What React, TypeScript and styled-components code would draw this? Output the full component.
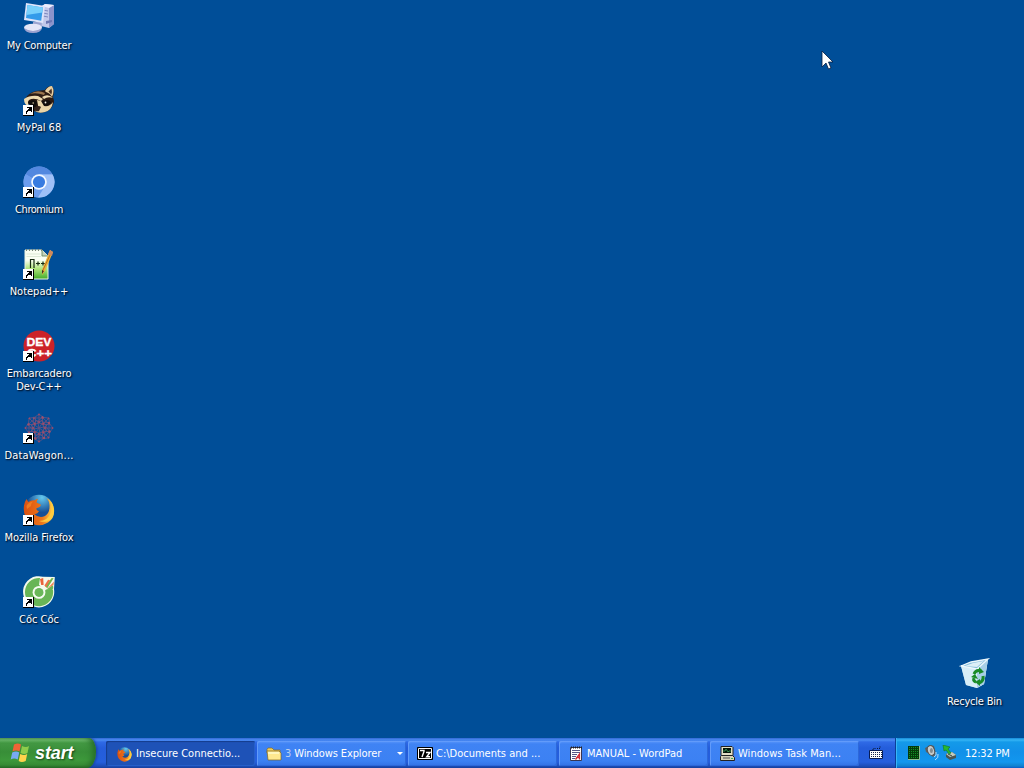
import React from 'react';
import styled, { createGlobalStyle, css } from 'styled-components';

const GlobalStyle = createGlobalStyle`
  * { box-sizing: border-box; }
  body { margin: 0; overflow: hidden; background: #004e98; }
`;

const Screen = styled.div`
  width: 1024px;
  height: 768px;
  display: flex;
  flex-direction: column;
  overflow: hidden;
  background: #004e98;
  font-family: 'DejaVu Sans Condensed', 'DejaVu Sans', sans-serif;
  font-stretch: condensed;
  font-size: 11px;
  color: #fff;
  cursor: default;
`;

const Desktop = styled.main`
  flex: 1;
  display: flex;
  justify-content: space-between;
  padding-top: 2px;
`;

const IconColumn = styled.div<{ $bottom?: boolean }>`
  width: 78px;
  display: flex;
  flex-direction: column;
  ${p => p.$bottom && css`
    width: 99px;
    justify-content: flex-end;
  `}
`;

const Shortcut = styled.div<{ $height?: number }>`
  height: ${p => p.$height ?? 82}px;
  display: flex;
  flex-direction: column;
  align-items: center;
`;

const IconBox = styled.div`
  position: relative;
  width: 32px;
  height: 32px;
  margin-bottom: 5px;
  svg { display: block; }
`;

const ArrowBadge = styled.svg`
  position: absolute;
  left: 0;
  bottom: 0;
`;

const Label = styled.span<{ $track?: number }>`
  font-size: 11px;
  line-height: 13px;
  text-align: center;
  white-space: pre;
  letter-spacing: ${p => p.$track ?? 0}px;
  text-shadow: 1px 1px 1px #001c3c, 1px 1px 2px #001c3c;
`;

const Pointer = styled.svg`
  position: absolute;
  left: 821px;
  top: 50px;
`;

const Taskbar = styled.footer`
  height: 30px;
  display: flex;
  align-items: stretch;
  background: linear-gradient(#3168d5 0, #4a8cf3 2px, #2f6ae6 4px, #245ddb 10px, #255fdd 24px, #1d4eb9 28px, #173f9c 30px);
`;

const StartButton = styled.div`
  width: 96px;
  height: 30px;
  display: flex;
  align-items: center;
  padding-left: 10px;
  gap: 5px;
  border-radius: 0 7px 9px 0 / 0 14px 16px 0;
  background: linear-gradient(#5a9f63 0, #6ab86a 2px, #439843 5px, #388e38 14px, #3d983b 22px, #388c36 27px, #236723 30px);
  box-shadow: inset -5px 0 6px -2px #256b28, 1px 0 3px #173f9c;
`;

const StartText = styled.span`
  font-family: 'Liberation Sans', Arial, sans-serif;
  font-stretch: normal;
  font-size: 18px;
  line-height: 20px;
  font-weight: 700;
  font-style: italic;
  letter-spacing: -0.1px;
  margin-top: -1px;
  text-shadow: 1px 1px 2px #174017;
`;

const TaskList = styled.div`
  flex: 1;
  display: flex;
  gap: 2px;
  padding: 3px 0 2px 10px;
`;

const Task = styled.div<{ $active?: boolean }>`
  width: 149px;
  flex: none;
  height: 25px;
  display: flex;
  align-items: center;
  gap: 3px;
  padding-left: 9px;
  border-radius: 2px;
  background: linear-gradient(#5b97fb 0, #3f83f4 3px, #3c81f3 20px, #3472e4 25px);
  box-shadow: inset 1px 1px 0 #629bfa, inset -1px -1px 0 #2d68d9;
  ${p => p.$active && css`
    background: #1e52b7;
    box-shadow: inset 1px 1px 1px #143c8c, inset -1px -1px 0 #265fc9;
    padding-left: 11px;
    padding-top: 1px;
    gap: 4px;
  `}
  svg { flex: none; }
`;

const TaskText = styled.span<{ $track?: number }>`
  white-space: pre;
  line-height: 14px;
  letter-spacing: ${p => p.$track ?? 0}px;
`;

const Count = styled.b`
  color: #bcd0ee;
  font-weight: 400;
`;

const Caret = styled.i`
  margin-left: auto;
  margin-right: 3px;
  border: 3px solid transparent;
  border-top-color: #fff;
  border-bottom: 0;
`;

const LanguageBar = styled.div`
  width: 36px;
  flex: none;
  display: flex;
  align-items: center;
  justify-content: center;
  padding-right: 2px;
`;

const Tray = styled.div`
  width: 129px;
  flex: none;
  display: flex;
  align-items: center;
  gap: 2px;
  padding-left: 10px;
  border-left: 1px solid #0b3f97;
  box-shadow: inset 1px 0 0 #38b6f8;
  background: linear-gradient(#1589d8 0, #35b4f5 2px, #149ae9 4px, #1190e9 14px, #1297ee 24px, #0f82cf 28px, #095bc9 30px);
`;

const Clock = styled.span`
  margin-left: 5px;
  margin-top: 1px;
  white-space: pre;
  line-height: 14px;
  letter-spacing: -0.2px;
`;

const Shape = ({ size = 32, children }: { size?: number; children: React.ReactNode }) => (
  <svg width={size} height={size} viewBox={`0 0 ${size} ${size}`}>{children}</svg>
);

const Computer = () => (
  <Shape>
    <path d="M19 4l3-2 9 1v19l-5 4-8-2z" fill="#c3c8ea" />
    <path d="M26 6l5-3v19l-5 4z" fill="#8b93cb" />
    <path d="M19 4l3-2 9 1-5 3z" fill="#eceefd" />
    <path d="M20 8l5 1M20 11l5 1M20 14l5 1" stroke="#7e88be" />
    <path d="M23 19l6-1v2l-6 2z" fill="#6c76b2" />
    <path d="M10 20h8l1 5h-9z" fill="#9da4d0" />
    <ellipse cx="10" cy="25.5" rx="9" ry="3.8" fill="#e5e6f7" />
    <path d="M1 26q9 6 18 0-1 5-9 5t-9-5z" fill="#9ba2d0" />
    <path d="M3 1l19 3-2 17L1 18z" fill="#dfe4fa" />
    <path d="M4.5 3l15.5 2.5-1.8 13.3L3 16z" fill="#349bea" />
    <path d="M4.5 3l15.5 2.5-.6 5L3.4 13z" fill="#78d0fc" />
  </Shape>
);

const Raccoon = () => (
  <Shape>
    <path d="M2 15Q5 9 13 7l9-1q2-4 7-4 3 5 1 11 1 3 1 5-2 8-9 10-6 2-11-1l-3-6-5-2z" fill="#2d1c14" />
    <path d="M7 10q7-5 15-1l-1 2q-8-3-14-1z" fill="#9b7650" />
    <path d="M1 15q6-4 14-3l5 3-2 2q-7-4-12-1-2 2 0 6-5-1-5-7z" fill="#efdbb0" />
    <path d="M22 7q3-5 7-5 3 5 0 11-2-4-6-5z" fill="#ead0a0" />
    <path d="M25.5 7.5l3-3q1 4-.2 6z" fill="#473026" />
    <path d="M19 13q6-4 11 1-5-2-9 1z" fill="#efdbb0" />
    <path d="M5 18q5-4 9 0l-1 5q-6 0-8-5z" fill="#120e0c" />
    <path d="M18 18q7-4 10 0-1 4-7 4z" fill="#120e0c" />
    <path d="M14 16l4 1 3 5q6 1 9-4-1 8-8 10-6 2-10-1 4-3 3-6z" fill="#ead5a7" />
    <path d="M12 23q4-2 6 0l-2 4q-4 1-5-2z" fill="#35241c" />
    <circle cx="22.5" cy="18.5" r=".9" fill="#f5efdf" />
    <circle cx="10.2" cy="19" r=".8" fill="#d6c39c" />
  </Shape>
);

const Chromium = () => (
  <Shape>
    <circle cx="16" cy="16" r="15.5" fill="#81aaf0" />
    <path d="M16 16L2.6 8.2A15.5 15.5 0 0 1 29.5 8.5H16z" fill="#5388df" />
    <path d="M2.6 8.2A15.5 15.5 0 0 0 15 31.5L22 20z" fill="#6c9dee" />
    <path d="M16 8.5h13.5A15.5 15.5 0 0 1 15 31.5l7.5-12z" fill="#9fc0f7" />
    <circle cx="16" cy="16" r="7.8" fill="#f4f8ff" />
    <circle cx="16" cy="16" r="6.1" fill="#387be0" />
  </Shape>
);

const Notepad = () => (
  <Shape>
    <defs><linearGradient id="page" x2="0" y2="1"><stop offset=".35" stopColor="#fafff3" /><stop offset=".65" stopColor="#aee47a" /><stop offset="1" stopColor="#42ab27" /></linearGradient></defs>
    <path d="M2 2h17l6 6v23H2z" fill="url(#page)" stroke="#e9f2e1" />
    <path d="M19 2v6h6" fill="#c4d2bd" stroke="#75906b" />
    <path d="M3 2h16" stroke="#7a8878" strokeWidth="2" strokeDasharray="1 2" />
    <path d="M3.5 6h14M3.5 8.5h15" stroke="#dce9d5" />
    <path d="M7.5 20v-9M8 11.5h3v8.5M13 15.5h4M15 13.5v4M18 15.5h4M20 13.5v4" fill="none" stroke="#172a11" strokeWidth="1.2" />
    <path d="M27 2l3 2-8 19-3 4v-5z" fill="#efb237" />
    <path d="M27 2l3 2-1 4-4-2z" fill="#cf8960" />
    <path d="M27 7l-7 15" stroke="#b86f20" />
    <path d="M19 22l2 1-2 3z" fill="#432c1e" />
  </Shape>
);

const DevMark = styled.text`
  font-family: 'Liberation Sans', Arial, sans-serif;
  font-size: 10.5px;
  font-weight: 700;
  fill: #fff;
  stroke: #fff;
  stroke-width: 0.3px;
`;

const DevCpp = () => (
  <Shape>
    <circle cx="16" cy="16" r="15.5" fill="#cc2229" />
    <DevMark x="3.4" y="15.5" textLength="25" lengthAdjust="spacingAndGlyphs">DEV</DevMark>
    <DevMark x="4" y="26.5" textLength="25" lengthAdjust="spacingAndGlyphs">C++</DevMark>
  </Shape>
);

const DataWagon = () => (
  <Shape>
    <g fill="none" stroke="#68517f" strokeWidth=".8">
      {[0, 45, 90, 135, 180, 225, 270, 315].map(a => (
        <g key={a} transform={`rotate(${a} 16 16)`}>
          <path d="M16 11l-5-5 5-4 5 4zM11 6l-1 6 6 4M16 2v9M11 6h10M12 9h8" />
          <circle cx="16" cy="2.5" r=".9" fill="#9c4a69" stroke="none" />
          <circle cx="11" cy="6" r="1.2" fill="#9e506d" stroke="none" />
          <circle cx="16" cy="10" r="1" fill="#a94b67" stroke="none" />
        </g>
      ))}
      <circle cx="16" cy="16" r="5" stroke="#8d506f" />
    </g>
  </Shape>
);

const Firefox = ({ size = 32 }: { size?: number }) => (
  <svg width={size} height={size} viewBox="0 0 32 32">
    <defs>
      <linearGradient id={`fox${size}`} x1="0" x2="1"><stop stopColor="#d95012" /><stop offset=".6" stopColor="#ee7519" /><stop offset="1" stopColor="#ffd54e" /></linearGradient>
      <radialGradient id={`globe${size}`} cx=".6" cy=".1"><stop stopColor="#65c9ef" /><stop offset="1" stopColor="#174f96" /></radialGradient>
    </defs>
    <circle cx="16" cy="15.5" r="14.8" fill={`url(#globe${size})`} />
    <path d="M3.5 5l1.8 3q3-2 6-1.6 2-1.7 4-1.6-2 2-1.5 4 4 1.5 4 2.2 0 2-4.3 3.3-.7 2 2.5 3-2 3.4-5 2.4 5 5.2 11 2.3 5-3 4.5-11-.3-5-3.5-7 7 3 8 11 1 9-6 13.5-9 5.5-17.5 0Q-.5 22 1 11.5 1.5 8 3.5 5z" fill={`url(#fox${size})`} />
    <path d="M24 4q6 5 4 14-3 9-12 9 14 4 15-11Q30.5 8 24 4z" fill="#ffcb3e" />
    <path d="M3.5 12q2-4 6.5-4.5-2 2-2 4.5l-4 3z" fill="#ef7a20" />
  </svg>
);

const CocCoc = () => (
  <Shape>
    <path d="M20 .8A15.6 15.6 0 1 0 31 13l.8-12z" fill="#f2f9ec" />
    <path d="M17 2A14.1 14.1 0 1 0 30 14l-8-1-6-4z" fill="#68b556" />
    <path d="M23 13l7-4q1 3-1 6z" fill="#68b556" />
    <path d="M17 2h14l-1 7-9 6-4-5z" fill="#f7f9ed" />
    <path d="M18.2 9L17 3l3.2-1L20.6 9z" fill="#e9643b" />
    <path d="M22.3 10.5L28.6 2l2 .3-6.3 10z" fill="#70b74a" />
    <path d="M21.4 9.5l3.7-5.7 2 .4-4 7z" fill="#ee7149" />
    <path d="M24.5 12.5l6.5-7-.6 3.6z" fill="#ec8051" />
    <circle cx="16" cy="16.4" r="6.4" fill="#f6fbf2" />
    <circle cx="16" cy="16.4" r="4.5" fill="#6ab759" />
  </Shape>
);

const RecycleBin = () => (
  <Shape>
    <path d="M2 8l11-4 16-3-4 25-7 4-11-3z" fill="#b4d8ed" />
    <path d="M2 8l16 3L29 1l-4 25-7 4-11-3z" fill="#d6edf7" />
    <path d="M18 11L29 1l-4 25-7 4z" fill="#a6cfe7" />
    <path d="M2 8l10-4 17-3-11 10z" fill="#86bddb" stroke="#edf8fd" strokeWidth="1.3" />
    <path d="M6 8l8-3 11-2-7 6z" fill="#dceff8" />
    <g fill="none" stroke="#198b28" strokeWidth="3">
      <path d="M15 16q2-5 7-3M24 18q1 5-4 7M17 24q-3-1-2-4" />
    </g>
    <path d="M20 9l5 5-5 2zM21 21v7l-5-4zM12 19l4-3 3 5z" fill="#198b28" />
  </Shape>
);

const WindowsFlag = () => (
  <svg width="20" height="20" viewBox="0 0 20 20">
    <path d="M4 1.5q4-2 7 0L9.5 8.5Q6 6.5 2.5 8.5z" fill="#f06336" />
    <path d="M12 3q4 2 7 0l-1.5 7q-3 2-7 0z" fill="#8dcc4b" />
    <path d="M2.2 9.5q4-2 7 0l-1.5 7Q4 14.5.7 16.5z" fill="#78aaf2" />
    <path d="M10.2 11q4 2 7 0l-1.5 7q-4 2-7 0z" fill="#ffd34c" />
  </svg>
);

const Folder = () => (
  <Shape size={16}>
    <path d="M1 3.5l1-1.5h4l2 2h6v3H1z" fill="#f2cd58" stroke="#846a24" strokeWidth=".7" />
    <path d="M1 5h12l2 2v7H2z" fill="#ffe98f" stroke="#806521" strokeWidth=".7" />
    <path d="M2 6h11v2H2z" fill="#fff7be" />
  </Shape>
);

const SevenZip = () => (
  <Shape size={16}>
    <path d="M.5 1.5h15v12H.5z" fill="#000" stroke="#000" />
    <path d="M1.5 2.5h13v10h-13z" fill="none" stroke="#fff" />
    <path d="M3 4.5h4v1l-2 5.5M9 6.5h4l-3.3 4.2H13" fill="none" stroke="#fff" strokeWidth="1.4" />
  </Shape>
);

const WordPad = () => (
  <Shape size={16}>
    <path d="M2.5 1.5h11v13h-11z" fill="#fff" stroke="#363653" />
    <path d="M3 1.5h11" stroke="#222" strokeWidth="2" strokeDasharray="1 1" />
    <path d="M4 4.5h8M4 6.5h8M4 8.5h5M4 10.5h4M4 12.5h3" stroke="#555586" />
    <path d="M7.5 13.5l4-5.5v5.5M9 11.5h3" fill="none" stroke="#d22933" strokeWidth="1.3" />
  </Shape>
);

const TaskManager = () => (
  <Shape size={16}>
    <path d="M2 .5h11l1 1v8H2z" fill="#e2dfc5" stroke="#222" />
    <path d="M4 2h8v5H4z" fill="#07150a" />
    <path d="M4 5h2l1-2 2 3 1-1h2" fill="none" stroke="#40a960" strokeWidth=".8" />
    <path d="M1.5 10.5l1-1h11l2 2v3h-14z" fill="#d6d2b8" stroke="#222" />
    <path d="M4 12h7" stroke="#555" />
    <path d="M12 12.5h2" stroke="#46b250" />
  </Shape>
);

const Keyboard = () => (
  <Shape size={16}>
    <path d="M5 5V3.5h3M9 3.5h3V1.5" fill="none" stroke="#071734" strokeDasharray="1 1" />
    <path d="M1.5 5.5h13v8h-13z" fill="#fff" stroke="#071c54" />
    <path d="M3 7.5h11M3 9.5h11M3 11.5h11" stroke="#14234c" strokeDasharray="1 1" />
  </Shape>
);

const CpuMeter = () => (
  <Shape size={16}>
    <path d="M2 1h11v13H2z" fill="#063a0b" />
    <path d="M3.5 2v11M5.5 2v11M7.5 2v11M9.5 2v11M11.5 2v11" stroke="#119224" strokeDasharray="1 1" />
    <path d="M2 14.5h11.5V1" fill="none" stroke="#90bd93" />
  </Shape>
);

const Speaker = () => (
  <Shape size={16}>
    <path d="M1 3l6-3 3 1 2 8-3 3-3-3-4-2z" fill="#5c6062" />
    <ellipse cx="7" cy="5.5" rx="3.5" ry="5" transform="rotate(-20 7 5.5)" fill="#c7cbcb" stroke="#494f53" />
    <ellipse cx="7.4" cy="5.5" rx="1.5" ry="2.6" fill="#838a8d" />
    <path d="M10 12q3-1 2-5M11 15q4-2 3-6" fill="none" stroke="#b5dcff" />
  </Shape>
);

const SafelyRemove = () => (
  <Shape size={16}>
    <path d="M4 9l6-2 4 3v3l-6 2-4-3z" fill="#4a5450" />
    <path d="M4 9l6-2 4 3-6 2z" fill="#c5cbbd" />
    <path d="M6 9l4 2" stroke="#344640" />
    <path d="M1 0l7 2-2 2 3 4-2 1-3-4-2 1z" fill="#26b832" stroke="#137725" strokeWidth=".6" />
  </Shape>
);

const Arrow = () => (
  <ArrowBadge width="11" height="11" viewBox="0 0 11 11" shapeRendering="crispEdges">
    <path d="M0 0h11v11H0z" fill="#000" />
    <path d="M0 0h10v10H0z" fill="#fff" />
    <path d="M4 2h5v5H8V6H7V5L6 6H5v1H4v2H3V6h1V5h1V4h1V3H4z" fill="#000" />
  </ArrowBadge>
);

const shortcuts = [
  { name: 'My Computer', icon: <Computer />, track: -0.2, plain: true },
  { name: 'MyPal 68', icon: <Raccoon />, track: 0 },
  { name: 'Chromium', icon: <Chromium />, track: -0.45 },
  { name: 'Notepad++', icon: <Notepad />, track: 0 },
  { name: 'Embarcadero\nDev-C++', icon: <DevCpp />, track: -0.1 },
  { name: 'DataWagon...', icon: <DataWagon />, track: 0.2 },
  { name: 'Mozilla Firefox', icon: <Firefox />, track: -0.05 },
  { name: 'Cốc Cốc', icon: <CocCoc />, track: 0 },
];

export default function App() {
  return (
    <Screen>
      <GlobalStyle />
      <Desktop>
        <IconColumn>
          {shortcuts.map(s => (
            <Shortcut key={s.name}>
              <IconBox>{s.icon}{!s.plain && <Arrow />}</IconBox>
              <Label $track={s.track}>{s.name}</Label>
            </Shortcut>
          ))}
        </IconColumn>
        <IconColumn $bottom>
          <Shortcut $height={80}>
            <IconBox><RecycleBin /></IconBox>
            <Label $track={-0.2}>Recycle Bin</Label>
          </Shortcut>
        </IconColumn>
      </Desktop>
      <Taskbar>
        <StartButton><WindowsFlag /><StartText>start</StartText></StartButton>
        <TaskList>
          <Task $active><Firefox size={15} /><TaskText>Insecure Connectio...</TaskText></Task>
          <Task><Folder /><TaskText $track={-0.1}><Count>3</Count> Windows Explorer</TaskText><Caret /></Task>
          <Task><SevenZip /><TaskText>C:\Documents and ...</TaskText></Task>
          <Task><WordPad /><TaskText>MANUAL - WordPad</TaskText></Task>
          <Task><TaskManager /><TaskText $track={0.05}>Windows Task Man...</TaskText></Task>
        </TaskList>
        <LanguageBar><Keyboard /></LanguageBar>
        <Tray><CpuMeter /><Speaker /><SafelyRemove /><Clock>12:32 PM</Clock></Tray>
      </Taskbar>
      <Pointer width="12" height="21" viewBox="0 0 12 21">
        <path d="M1 1v16l4-4 2.5 6 2.5-1-2.5-6H12z" fill="#fff" stroke="#061c3f" strokeWidth=".8" />
      </Pointer>
    </Screen>
  );
}
